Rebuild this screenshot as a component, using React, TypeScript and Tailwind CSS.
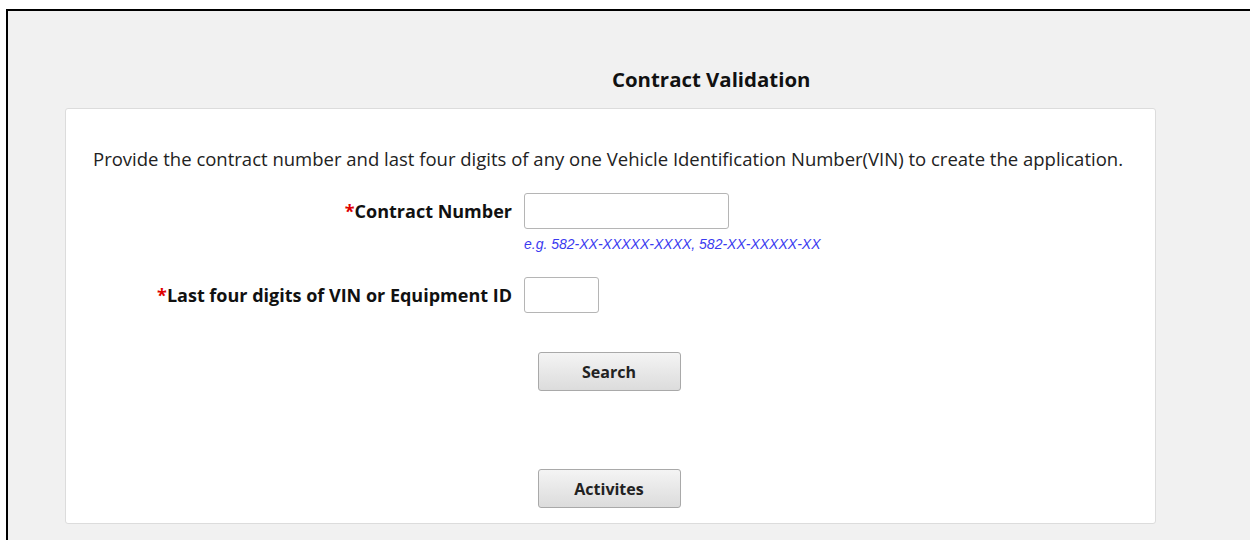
export default function App() {
  return (
    <div className="h-[540px] w-full overflow-hidden bg-white pl-[6px] pt-[9px] font-['Open_Sans',sans-serif] text-[#1a1a1a]">
      <div className="h-[600px] border-0 border-l-2 border-t-2 border-solid border-l-black border-t-black bg-[#f1f1f1]">
        <h1 className="pl-[604px] pt-[55px] text-[20.4px] font-bold leading-[26px] text-[#111]">Contract Validation</h1>

        <div className="ml-[57px] mt-[16px] h-[416px] w-[1091px] rounded-[3px] border border-[#dcdcdc] bg-white">
          <p className="pl-[27px] pt-[38px] text-[18.5px] leading-[24px] text-[#222]">
            Provide the contract number and last four digits of any one Vehicle Identification Number(VIN) to create the application.
          </p>

          <div className="mt-[22px] grid grid-cols-[446px_1fr] gap-x-[12px]">
            <label className="pt-[7px] text-right text-[18px] font-bold leading-[22px] text-[#111]">
              <span className="text-[#e00000]">*</span>Contract Number
            </label>
            <div>
              <input className="h-[36px] w-[205px] rounded-[3px] border border-[#b5b5b5] bg-white px-2 text-[15px]" />
              <div className="mt-[7px] font-['Liberation_Sans',sans-serif] text-[14px] italic leading-[16px] text-[#3a3af0]">
                e.g. 582-XX-XXXXX-XXXX, 582-XX-XXXXX-XX
              </div>
            </div>

            <label className="mt-[25px] pt-[7px] text-right text-[18px] font-bold leading-[22px] text-[#111]">
              <span className="text-[#e00000]">*</span>Last four digits of VIN or Equipment ID
            </label>
            <div className="mt-[25px]">
              <input className="h-[36px] w-[75px] rounded-[3px] border border-[#b5b5b5] bg-white px-2 text-[15px]" />
            </div>
          </div>

          <div className="mt-[39px] flex flex-col items-center pr-[3px]">
            <button className="h-[39px] w-[143px] rounded-[3px] border border-[#a9a9a9] bg-gradient-to-b from-[#f4f4f4] to-[#dcdcdc] text-[16px] font-bold text-[#222]">
              Search
            </button>
            <button className="mt-[78px] h-[39px] w-[143px] rounded-[3px] border border-[#a9a9a9] bg-gradient-to-b from-[#f4f4f4] to-[#dcdcdc] text-[16px] font-bold text-[#222]">
              Activites
            </button>
          </div>
        </div>
      </div>
    </div>
  );
}
